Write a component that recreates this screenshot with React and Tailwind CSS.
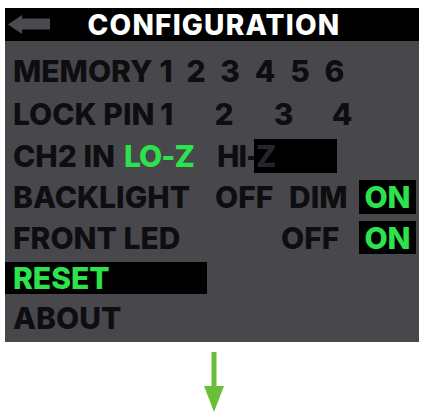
import React from "react";

const F = { fontFamily: "Inter, 'Noto Sans', sans-serif" };

export default function App() {
  return (
    <div className="w-[426px] h-[412px] bg-white relative overflow-hidden" style={F}>
      <div className="pt-[8px] pl-[5px]">
        <div className="w-[414px] bg-[#48474c] pb-[4px] font-extrabold text-[#0e0e10] text-[30px] leading-none whitespace-nowrap">
          {/* header */}
          <div className="h-[33px] bg-black flex items-center relative">
            <svg className="absolute left-[3px] top-[7px]" width="44" height="19" viewBox="0 0 44 19">
              <polygon points="0,9.5 14,0 14,19" fill="#4b4a50" />
              <rect x="14" y="3.5" width="28" height="11" fill="#4b4a50" />
            </svg>
            <div className="w-full text-center text-white text-[28px] tracking-[1.2px] pl-[4px]">CONFIGURATION</div>
          </div>
          <div className="pt-[9px]">
            {/* MEMORY */}
            <div className="h-[42px] flex items-center pl-[8px]">
              <div className="w-[138px]">MEMORY</div>
              <div className="w-[30px] text-center">1</div>
              <div className="w-[30px] text-center">2</div>
              <div className="w-[30px] text-center ml-[4px]">3</div>
              <div className="w-[30px] text-center ml-[5px]">4</div>
              <div className="w-[30px] text-center ml-[5px]">5</div>
              <div className="w-[30px] text-center ml-[4.5px]">6</div>
            </div>
            {/* LOCK PIN */}
            <div className="h-[43px] flex items-center pl-[8px]">
              <div className="w-[138.5px]">LOCK PIN</div>
              <div className="w-[30px] text-center">1</div>
              <div className="w-[30px] text-center ml-[27.5px]">2</div>
              <div className="w-[30px] text-center ml-[29.5px]">3</div>
              <div className="w-[30px] text-center ml-[28.5px]">4</div>
            </div>
            {/* CH2 IN */}
            <div className="h-[41px] flex items-center pl-[8px]">
              <div className="w-[111px]">CH2 IN</div>
              <div className="w-[93px] text-[#2ee24d] tracking-[-1px]">LO-Z</div>
              <div className="w-[37px] tracking-[-1px]">HI-</div>
              <div className="w-[83px] h-[34px] bg-black flex items-center pl-[2px] text-[#26262a]">Z</div>
            </div>
            {/* BACKLIGHT */}
            <div className="h-[41px] flex items-center pl-[8px]">
              <div className="w-[202px]">BACKLIGHT</div>
              <div className="w-[74px]">OFF</div>
              <div className="w-[70px]">DIM</div>
              <div className="w-[57px] h-[34px] bg-black flex items-center justify-center text-[#2ee24d]">ON</div>
            </div>
            {/* FRONT LED */}
            <div className="h-[41px] flex items-center pl-[8px]">
              <div className="w-[268px]">FRONT LED</div>
              <div className="w-[78px]">OFF</div>
              <div className="w-[57px] h-[33px] bg-black flex items-center justify-center text-[#2ee24d]">ON</div>
            </div>
            {/* RESET */}
            <div className="h-[40px] flex items-center">
              <div className="w-[202px] h-[32px] bg-black flex items-center pl-[8px] text-[#2ee24d]">RESET</div>
            </div>
            {/* ABOUT */}
            <div className="h-[40px] flex items-center pl-[8px]">
              <div>ABOUT</div>
            </div>
          </div>
        </div>
      </div>
      <div className="flex justify-center pt-[10px] pl-[2px]">
        <svg width="20" height="60" viewBox="0 0 20 60">
          <rect x="7.5" y="0" width="5" height="36" fill="#6abf3a" />
          <polygon points="0,34 20,34 10,60" fill="#6abf3a" />
        </svg>
      </div>
    </div>
  );
}
